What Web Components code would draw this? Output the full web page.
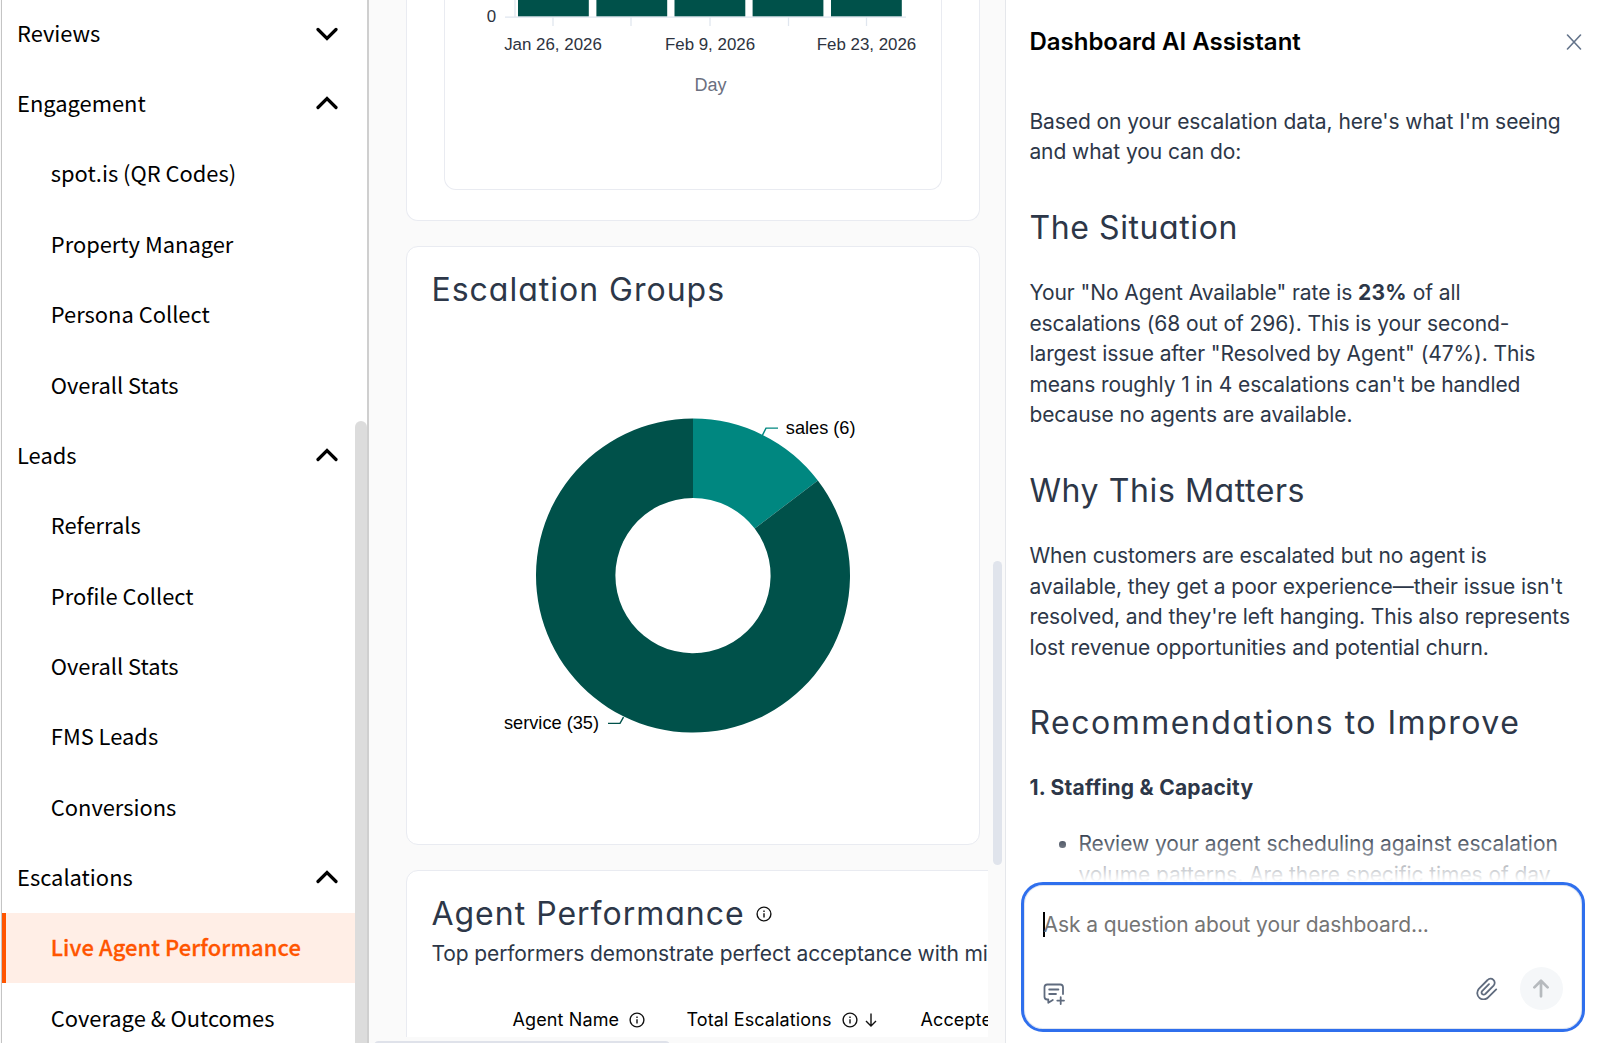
<!DOCTYPE html>
<html lang="en">
<head>
<meta charset="utf-8">
<title>Live Agent Performance</title>
<style>
  html, body {
    margin: 0;
    height: 100%;
    overflow: hidden;
    background: #fafafa;
  }
  body {
    font-family: Inter, "Liberation Sans", sans-serif;
    color: #2d3748;
  }
</style>
</head>
<body>
<app-shell>
  <side-nav slot="nav">
    <nav-row chevron="down">Reviews</nav-row>
    <nav-row chevron="up">Engagement</nav-row>
    <nav-row sub>spot.is (QR Codes)</nav-row>
    <nav-row sub>Property Manager</nav-row>
    <nav-row sub>Persona Collect</nav-row>
    <nav-row sub>Overall Stats</nav-row>
    <nav-row chevron="up">Leads</nav-row>
    <nav-row sub>Referrals</nav-row>
    <nav-row sub>Profile Collect</nav-row>
    <nav-row sub>Overall Stats</nav-row>
    <nav-row sub>FMS Leads</nav-row>
    <nav-row sub>Conversions</nav-row>
    <nav-row chevron="up">Escalations</nav-row>
    <nav-row sub active>Live Agent Performance</nav-row>
    <nav-row sub>Coverage &amp; Outcomes</nav-row>
  </side-nav>

  <dash-board>
    <dash-card class="first"><day-chart></day-chart></dash-card>
    <dash-card class="groups">
      <span slot="title">Escalation Groups</span>
      <group-donut></group-donut>
    </dash-card>
    <dash-card class="agents">
      <span slot="title">Agent Performance</span>
      <info-icon slot="title"></info-icon>
      <agent-table></agent-table>
    </dash-card>
  </dash-board>

  <assistant-panel slot="panel" heading="Dashboard AI Assistant">
    <assistant-message></assistant-message>
    <chat-composer slot="composer" placeholder="Ask a question about your dashboard..."></chat-composer>
  </assistant-panel>
</app-shell>

<script>
class AppShell extends HTMLElement {
  constructor () {
    super()
    const shadow = this.attachShadow({ mode: 'open' })
    shadow.innerHTML = `
      <style>
        :host {
          display: grid;
          grid-template-columns: 369px 636px 1fr;
          height: 1043px;
          overflow: hidden;
        }
      </style>
      <slot name="nav"></slot>
      <slot></slot>
      <slot name="panel"></slot>
    `
  }
}

class SideNav extends HTMLElement {
  constructor () {
    super()
    const shadow = this.attachShadow({ mode: 'open' })
    shadow.innerHTML = `
      <style>
        :host {
          display: flex;
          box-sizing: border-box;
          height: 1043px;
          overflow: hidden;
          margin-left: 1px;
          background: #fff;
          border-left: 1px solid #c4c4c4;
          border-right: 2px solid #cfcfcf;
          color: #000;
          font: 400 21.9px/70px "Noto Sans CJK SC", "Noto Sans", sans-serif;
        }
        nav {
          flex: 1;
          margin-top: -1.7px;
        }
        .thumb {
          width: 12px;
          margin-top: 420.5px;
          background: #dcdcdc;
          border-radius: 6px 6px 0 0;
        }
      </style>
      <nav><slot></slot></nav>
      <div class="thumb"></div>
    `
  }
}

class NavRow extends HTMLElement {
  constructor () {
    super()
    const shadow = this.attachShadow({ mode: 'open' })
    const chevron = this.getAttribute('chevron')
    const points = chevron === 'up' ? '2,11.5 11,2.5 20,11.5' : '2,2.5 11,11.5 20,2.5'
    shadow.innerHTML = `
      <style>
        :host {
          display: flex;
          justify-content: space-between;
          align-items: center;
          box-sizing: border-box;
          height: 70.36px;
          padding: 0 17px 1.6px 15px;
          white-space: nowrap;
        }
        :host([sub]) {
          padding-left: 48.8px;
        }
        :host([active]) {
          padding-left: 44.8px;
          border-left: 4px solid #ff5500;
          background: #ffeee6;
          color: #ff5500;
          font-weight: 500;
          letter-spacing: 0.1px;
          -webkit-text-stroke: 0.3px #ff5500;
        }
        svg {
          margin-top: 3px;
        }
        svg.up {
          margin-top: 0;
        }
      </style>
      <span><slot></slot></span>
      ${chevron
        ? `<svg class="${chevron}" width="22" height="14" viewBox="0 0 22 14" fill="none" stroke="#000" stroke-width="3.2" stroke-linecap="round" stroke-linejoin="miter"><polyline points="${points}"/></svg>`
        : ''}
    `
  }
}

class DashBoard extends HTMLElement {
  constructor () {
    super()
    const shadow = this.attachShadow({ mode: 'open' })
    shadow.innerHTML = `
      <style>
        :host {
          display: grid;
          grid-template: 1037px 6px / 619px 17px;
          background: #fafafa;
        }
        .view {
          overflow: hidden;
          display: flex;
          flex-direction: column;
          align-items: flex-start;
          gap: 25px;
          padding-left: 37px;
        }
        .vbar, .hbar {
          display: flex;
        }
        .vbar i {
          width: 9px;
          height: 304px;
          margin: 561px 0 0 4.5px;
          border-radius: 5px;
          background: #e0e4ec;
        }
        .hbar i {
          width: 296px;
          height: 9px;
          margin: 4px 0 0 5px;
          border-radius: 5px;
          background: #dfe2ea;
        }
        .hbar {
          overflow: hidden;
        }
      </style>
      <div class="view"><slot></slot></div>
      <div class="vbar"><i></i></div>
      <div class="hbar"><i></i></div>
    `
  }
}

class DashCard extends HTMLElement {
  constructor () {
    super()
    const shadow = this.attachShadow({ mode: 'open' })
    shadow.innerHTML = `
      <style>
        :host {
          display: block;
          flex: none;
          box-sizing: border-box;
          width: 574px;
          background: #fff;
          border: 1.4px solid #e9ebf1;
          border-radius: 12px;
        }
        :host(.first) {
          height: 221px;
          border-top: 0;
          border-radius: 0 0 12px 12px;
          padding: 0 37px;
        }
        :host(.first) h2 {
          display: none;
        }
        :host(.groups) {
          height: 599px;
        }
        :host(.agents) {
          width: 1100px;
          height: 400px;
        }
        h2 {
          display: flex;
          align-items: center;
          gap: 11px;
          margin: 0;
          padding: 21.4px 24.4px 0;
          font-weight: 400;
          font-size: 32px;
          line-height: 44px;
          letter-spacing: 1px;
          font-feature-settings: "cv11";
          white-space: nowrap;
        }
      </style>
      <h2><slot name="title"></slot></h2>
      <slot></slot>
    `
  }
}

class InfoIcon extends HTMLElement {
  constructor () {
    super()
    const shadow = this.attachShadow({ mode: 'open' })
    shadow.innerHTML = `
      <style>
        :host {
          display: inline-flex;
          flex: none;
        }
      </style>
      <svg width="16" height="16" viewBox="0 0 16 16" fill="none" stroke="#111" stroke-width="1.4">
        <circle cx="8" cy="8" r="6.9"/>
        <path d="M8 7.2V11.6M8 4.4V5.9"/>
      </svg>
    `
  }
}

class DayChart extends HTMLElement {
  constructor () {
    super()
    const shadow = this.attachShadow({ mode: 'open' })
    const bars = [518, 596.4, 674.5, 752.6, 831]
    const ticks = [553, 631, 710, 788.5, 866.5]
    shadow.innerHTML = `
      <style>
        :host {
          display: block;
          box-sizing: border-box;
          width: 498px;
          height: 189.5px;
          border: 1.4px solid #e9ebf1;
          border-top: 0;
          border-radius: 0 0 12px 12px;
        }
        svg {
          display: block;
          font-family: "Liberation Sans", Arial, sans-serif;
        }
      </style>
      <svg width="495" height="120" viewBox="445 0 495 120">
        ${bars.map(x => `<rect x="${x}" y="-2" width="70.8" height="18.6" fill="#00514a"/>`).join('')}
        <g stroke="#e0e6ef" stroke-width="1.3">
          <path d="M505 17.2H906M515 0V17"/>
          ${ticks.map(x => `<path d="M${x} 17V26"/>`).join('')}
        </g>
        <g font-size="16.9" fill="#2d3340" text-anchor="middle">
          <text x="491.5" y="22">0</text>
          <text x="553" y="50">Jan 26, 2026</text>
          <text x="710" y="50">Feb 9, 2026</text>
          <text x="866.5" y="50">Feb 23, 2026</text>
          <text x="710.5" y="91" font-size="18" fill="#6b7080">Day</text>
        </g>
      </svg>
    `
  }
}

class GroupDonut extends HTMLElement {
  constructor () {
    super()
    const shadow = this.attachShadow({ mode: 'open' })
    const total = 41
    const end = 6 / total * Math.PI * 2
    const at = r => `${(693 + r * Math.sin(end)).toFixed(2)} ${(576.5 - r * Math.cos(end)).toFixed(2)}`
    const R = 157
    const r = 77.6
    shadow.innerHTML = `
      <style>
        :host {
          display: block;
        }
        svg {
          display: block;
          font: 18.2px "Liberation Sans", Arial, sans-serif;
        }
      </style>
      <svg width="571" height="400" viewBox="407 312.9 571 400" overflow="visible">
        <path fill="#008780" d="M693 ${576.5 - R}A${R} ${R} 0 0 1 ${at(R)}L${at(r)}A${r} ${r} 0 0 0 693 ${576.5 - r}Z"/>
        <path fill="#00514a" d="M${at(R)}A${R} ${R} 0 1 1 693 ${576.5 - R}V${576.5 - r}A${r} ${r} 0 1 0 ${at(r)}Z"/>
        <path d="M762.5 436L766 429H778" fill="none" stroke="#008780" stroke-width="1.4"/>
        <path d="M623.5 718L620 724.3H608" fill="none" stroke="#00514a" stroke-width="1.4"/>
        <text x="785.8" y="435.3">sales (6)</text>
        <text x="504" y="730">service (35)</text>
      </svg>
    `
  }
}

class AgentTable extends HTMLElement {
  constructor () {
    super()
    const shadow = this.attachShadow({ mode: 'open' })
    shadow.innerHTML = `
      <style>
        :host {
          display: block;
          white-space: nowrap;
        }
        p {
          margin: 0;
          padding-left: 24.4px;
          font-size: 21px;
          line-height: 36px;
          letter-spacing: -0.1px;
        }
        .head {
          display: grid;
          grid-template-columns: 174px 234px 1fr;
          padding: 34px 0 0 105.5px;
          color: #000;
          font-size: 18px;
          line-height: 28px;
          letter-spacing: 0.12px;
        }
        .head span {
          display: flex;
          align-items: center;
          gap: 10px;
        }
        .head svg {
          margin-left: -3px;
        }
      </style>
      <p>Top performers demonstrate perfect acceptance with minimal missed escalations</p>
      <div class="head">
        <span>Agent Name <info-icon></info-icon></span>
        <span>Total Escalations <info-icon></info-icon>
          <svg width="12" height="16" viewBox="0 0 12 16" fill="none" stroke="#111" stroke-width="1.4"><path d="M6 1.5V14M1 9L6 14L11 9"/></svg>
        </span>
        <span>Accepted</span>
      </div>
    `
  }
}

class AssistantPanel extends HTMLElement {
  constructor () {
    super()
    const shadow = this.attachShadow({ mode: 'open' })
    shadow.innerHTML = `
      <style>
        :host {
          display: flex;
          flex-direction: column;
          box-sizing: border-box;
          height: 1043px;
          background: #fff;
          border-left: 1px solid #e5e7eb;
        }
        header {
          display: flex;
          justify-content: space-between;
          align-items: center;
          height: 83.6px;
          padding: 0 18px 0 23.4px;
          color: #000;
        }
        h1 {
          margin: 0;
          font-size: 24px;
          font-weight: 600;
        }
        .scroll {
          position: relative;
          height: 798.7px;
          overflow: hidden;
        }
        .fade {
          position: absolute;
          inset: auto 0 0 0;
          height: 50px;
          background: linear-gradient(rgba(255, 255, 255, 0), #fff);
        }
      </style>
      <header>
        <h1></h1>
        <svg width="16" height="16" viewBox="0 0 16 16" fill="none" stroke="#64748b" stroke-width="1.6" stroke-linecap="round"><path d="M1.5 1L14.5 15M14.5 1L1.5 15"/></svg>
      </header>
      <div class="scroll">
        <slot></slot>
        <div class="fade"></div>
      </div>
      <slot name="composer"></slot>
    `
    shadow.querySelector('h1').textContent = this.getAttribute('heading')
  }
}

class AssistantMessage extends HTMLElement {
  constructor () {
    super()
    const shadow = this.attachShadow({ mode: 'open' })
    shadow.innerHTML = `
      <style>
        :host {
          display: block;
          padding: 23.2px 0 0 23.4px;
          font-size: 21px;
          line-height: 30.6px;
          letter-spacing: -0.07px;
          white-space: nowrap;
        }
        p, h2, ul {
          margin: 0;
        }
        h2 {
          margin: 38px 0 28px;
          font-size: 32px;
          font-weight: 400;
          line-height: 44px;
          letter-spacing: 0.6px;
          font-feature-settings: "cv11";
        }
        h2.wide {
          letter-spacing: 1.5px;
        }
        b {
          font-weight: 700;
          letter-spacing: 0.25px;
        }
        ul {
          margin-top: 25px;
          padding: 0;
          list-style: none;
        }
        li {
          display: flex;
          align-items: flex-start;
          gap: 12.5px;
          padding-left: 30px;
        }
        li::before {
          content: "";
          width: 6.6px;
          height: 6.6px;
          margin-top: 12px;
          border-radius: 50%;
          background: #2d3748;
        }
      </style>
      <p>Based on your escalation data, here's what I'm seeing<br>and what you can do:</p>
      <h2>The Situation</h2>
      <p>Your "No Agent Available" rate is <b>23%</b> of all<br>escalations (68 out of 296). This is your second-<br>largest issue after "Resolved by Agent" (47%). This<br>means roughly 1 in 4 escalations can't be handled<br>because no agents are available.</p>
      <h2>Why This Matters</h2>
      <p>When customers are escalated but no agent is<br>available, they get a poor experience—their issue isn't<br>resolved, and they're left hanging. This also represents<br>lost revenue opportunities and potential churn.</p>
      <h2 class="wide">Recommendations to Improve</h2>
      <p><b>1. Staffing &amp; Capacity</b></p>
      <ul>
        <li><span>Review your agent scheduling against escalation<br>volume patterns. Are there specific times of day</span></li>
      </ul>
    `
  }
}

class ChatComposer extends HTMLElement {
  constructor () {
    super()
    const shadow = this.attachShadow({ mode: 'open' })
    shadow.innerHTML = `
      <style>
        :host {
          display: flex;
          flex-direction: column;
          justify-content: space-between;
          box-sizing: border-box;
          height: 150px;
          margin: 0 15.5px 0 14.5px;
          padding: 25.8px 19px 19px 19.6px;
          border: 3.6px solid #2f6fed;
          border-radius: 22px;
          background: #fff;
          box-shadow: inset 0 0 0 1px #dfe5ef;
        }
        .input {
          display: flex;
          align-items: center;
          height: 26px;
          color: #757575;
          font-size: 21px;
          letter-spacing: -0.1px;
          white-space: nowrap;
        }
        .input::before {
          content: "";
          width: 2px;
          height: 25px;
          margin-right: -1.5px;
          background: #000;
        }
        .tools {
          display: flex;
          align-items: center;
          height: 43px;
        }
        .tools svg {
          flex: none;
        }
        .new {
          margin: 10px auto 0 0;
        }
        .send {
          display: flex;
          align-items: center;
          justify-content: center;
          width: 43px;
          height: 43px;
          margin-left: 22px;
          border-radius: 50%;
          background: #f5f7f9;
        }
      </style>
      <div class="input"><span></span></div>
      <div class="tools">
        <svg class="new" width="22" height="22" viewBox="0 0 22 22" fill="none" stroke="#5f6b7e" stroke-width="1.8" stroke-linecap="round" stroke-linejoin="round">
          <path d="M20 11V4.2Q20 1.5 17.3 1.5H4.2Q1.5 1.5 1.5 4.2V13.8Q1.5 16.5 4.2 16.5H5.3V19.8L9.8 17"/>
          <path d="M6.2 6.5H15.4M6.2 11H13M17.7 14.2V21M14.3 17.6H21"/>
        </svg>
        <svg width="22" height="23" viewBox="0 0 22 23" fill="none" stroke="#5f6b7e" stroke-width="1.8" stroke-linecap="round" stroke-linejoin="round">
          <path d="M20.2 12.4L12.4 20.2A5.9 5.9 0 0 1 2.8 11.9L11.6 3A4 4 0 0 1 17.6 8.6L9.3 17A2.1 2.1 0 0 1 6.1 14.1L13 7.1"/>
        </svg>
        <div class="send">
          <svg width="18" height="19" viewBox="0 0 18 19" fill="none" stroke="#b6babe" stroke-width="2.7" stroke-linecap="round" stroke-linejoin="round"><path d="M9 17.3V2M2.4 8.4L9 1.8L15.6 8.4"/></svg>
        </div>
      </div>
    `
    shadow.querySelector('.input span').textContent = this.getAttribute('placeholder')
  }
}

customElements.define('app-shell', AppShell)
customElements.define('side-nav', SideNav)
customElements.define('nav-row', NavRow)
customElements.define('dash-board', DashBoard)
customElements.define('dash-card', DashCard)
customElements.define('info-icon', InfoIcon)
customElements.define('day-chart', DayChart)
customElements.define('group-donut', GroupDonut)
customElements.define('agent-table', AgentTable)
customElements.define('assistant-panel', AssistantPanel)
customElements.define('assistant-message', AssistantMessage)
customElements.define('chat-composer', ChatComposer)
</script>
</body>
</html>
